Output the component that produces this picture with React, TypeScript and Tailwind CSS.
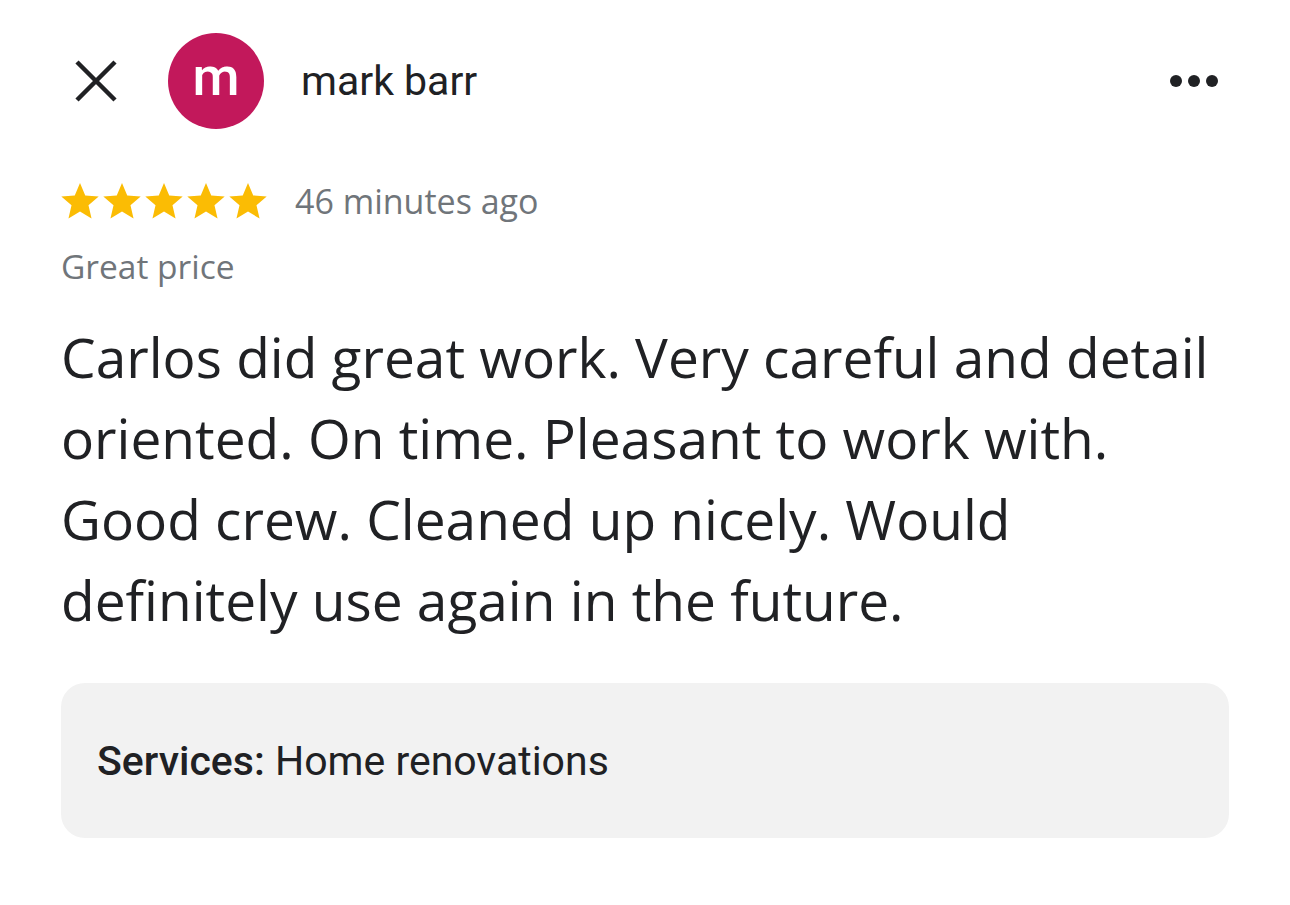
import React from 'react';

const GSANS = "font-['Open_Sans',Roboto,sans-serif]";

function Star() {
  return (
    <svg viewBox="2 2 20 19.27" className="h-[36px] w-[38px] shrink-0" fill="#fbbc04">
      <path d="M12 17.27 18.18 21l-1.64-7.03L22 9.24l-7.19-.61L12 2 9.19 8.63 2 9.24l5.46 4.73L5.82 21z" />
    </svg>
  );
}

export default function App() {
  return (
    <div className="min-h-[905px] w-full bg-white text-[#202124]">
      {/* Header */}
      <div className="flex h-[162px] items-center pl-[72px] pr-[72px]">
        <button className="flex h-[48px] w-[48px] items-center justify-center">
          <svg viewBox="0 0 44 44" className="h-[44px] w-[44px]" stroke="#202124" strokeWidth="4.5" strokeLinecap="butt">
            <path d="M3 3 41 41M41 3 3 41" />
          </svg>
        </button>
        <div className="ml-[48px] flex h-[96px] w-[96px] items-center justify-center rounded-full bg-[#c2185b]">
          <span className="font-['Roboto',sans-serif] text-[54px] font-medium leading-none text-white -mt-[8px]">m</span>
        </div>
        <div className="ml-[37px] font-['Roboto',sans-serif] text-[41px] leading-none text-[#202124]">
          mark barr
        </div>
        <div className="ml-auto flex items-center gap-[6px]">
          <span className="h-[12px] w-[12px] rounded-full bg-[#202124]" />
          <span className="h-[12px] w-[12px] rounded-full bg-[#202124]" />
          <span className="h-[12px] w-[12px] rounded-full bg-[#202124]" />
        </div>
      </div>

      <div className="px-[61px]">
        {/* Rating row */}
        <div className="mt-[21px] flex items-center">
          <div className="flex items-center gap-[4px]">
            <Star />
            <Star />
            <Star />
            <Star />
            <Star />
          </div>
          <span className={`${GSANS} ml-[28px] text-[34px] leading-none text-[#70757a]`}>46 minutes ago</span>
        </div>

        <div className={`${GSANS} mt-[31px] text-[33.5px] leading-none text-[#70757a]`}>Great price</div>

        {/* Review body */}
        <p className={`${GSANS} mt-[32px] whitespace-nowrap text-[55px] leading-[81px] text-[#202124]`}>
          Carlos did great work. Very careful and detail
          <br />
          oriented. On time. Pleasant to work with.
          <br />
          Good crew. Cleaned up nicely. Would
          <br />
          definitely use again in the future.
        </p>

        {/* Services */}
        <div className="mt-[43px] flex h-[155px] items-center rounded-[24px] bg-[#f2f2f2] px-[36px] pt-[3px]">
          <span className="font-['Roboto',sans-serif] text-[41px] leading-none text-[#202124]">
            <span className="font-medium">Services:</span> Home renovations
          </span>
        </div>
      </div>
    </div>
  );
}
